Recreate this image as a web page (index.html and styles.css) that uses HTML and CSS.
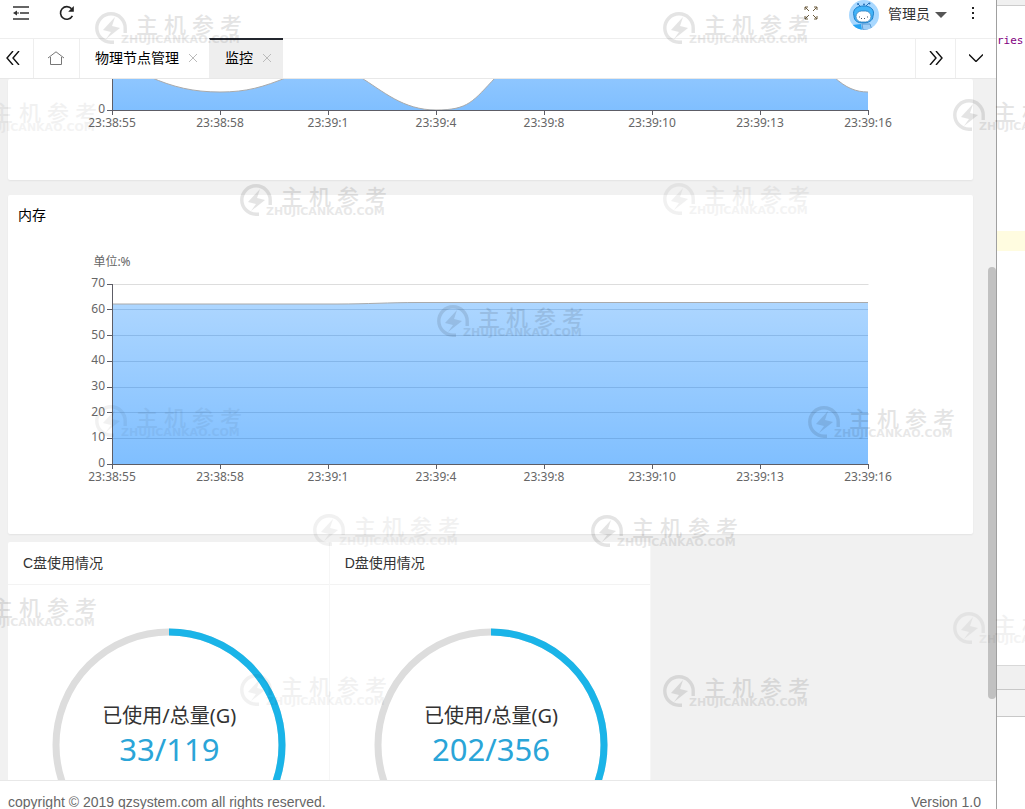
FILE: index.html
```html
<!DOCTYPE html>
<html lang="zh-CN">
<head>
<meta charset="utf-8">
<meta name="viewport" content="width=device-width, initial-scale=1">
<title>监控</title>
<link rel="stylesheet" href="styles.css">
</head>
<body>
<div class="desktop">
  <div class="window">
    <header class="topbar">
      <button class="icon-btn" aria-label="收起菜单">
        <svg width="16" height="14" viewBox="0 0 16 14"><path d="M0 1h16M7 7h9M0 13h16" stroke="#333" stroke-width="1.6" fill="none"/><path d="M0 7l4-2.6v5.2z" fill="#333"/><path d="M4 7h2" stroke="#333"/></svg>
      </button>
      <button class="icon-btn refresh" aria-label="刷新">
        <svg width="16" height="16" viewBox="0 0 16 16"><path d="M13.4 10.8A6.3 6.3 0 1 1 12.6 3.800" stroke="#222" stroke-width="1.6" fill="none"/><path d="M14.8 1v5.700H9.200z" fill="#222"/></svg>
      </button>
      <div class="top-right">
        <button class="icon-btn full" aria-label="全屏">
          <svg width="14" height="14" viewBox="0 0 14 14" fill="none" stroke="#6b5a3c" stroke-width="1"><path d="M1 4V1h3M1 1l4 4M10 1h3v3M13 1L9 5M1 10v3h3M1 13l4-4M13 10v3h-3M13 13L9 9"/></svg>
        </button>
        <button class="user">
          <svg class="avatar" width="30" height="30" viewBox="0 0 30 30">
            <defs><clipPath id="face"><circle cx="15" cy="15" r="15"/></clipPath></defs>
            <g clip-path="url(#face)">
              <rect width="30" height="30" fill="#a8d8ff"/>
              <path d="M9 4l3 3M20 3l-3 3" stroke="#2a72b8"/>
              <circle cx="9" cy="4" r="1" fill="#2a72b8"/><circle cx="15" cy="4.500" r="1" fill="#2a72b8"/><circle cx="20.500" cy="3.500" r="1" fill="#2a72b8"/>
              <path d="M5 16C3 9 8 6 15 6s11 4 9 10c0 5-5 7-10 7S5 21 5 16z" fill="#43b4f8" stroke="#1d7fc9"/>
              <path d="M3 25l9-1 1 6H5z" fill="#25a4f4"/>
              <path d="M13 24h8l2 6H14z" fill="#9fcdf5" stroke="#5d9bd4"/>
              <rect x="7" y="11" width="15" height="11" rx="5.500" fill="#fff" stroke="#317fbd" stroke-width=".8"/>
              <path d="M10.500 16.500v1M18.500 16.500v1M12 18.500h1M15 18.500h1" stroke="#456"/>
            </g>
          </svg>
          <span>管理员</span>
          <svg width="12" height="6" viewBox="0 0 12 6"><path d="M0 0h12L6 6z" fill="#555"/></svg>
        </button>
        <button class="icon-btn more" aria-label="更多">
          <svg width="4" height="14" viewBox="0 0 4 14" fill="#222"><path d="M1 1h2v2H1zM1 6h2v2H1zM1 11h2v2H1z"/></svg>
        </button>
      </div>
    </header>

    <nav class="tabs">
      <button class="tab-ctl prev" aria-label="向左"><svg width="14" height="14" viewBox="0 0 14 14"><path d="M7 0L1 7l6 7M13 0L7 7l6 7"/></svg></button>
      <button class="tab-ctl home" aria-label="主页"><svg width="16" height="14" viewBox="0 0 16 14"><path d="M0 7L8 .8 16 7M2.500 6v7.500h11V6"/></svg></button>
      <div class="tab"><a href="#nodes">物理节点管理</a><button class="close" aria-label="关闭"><svg width="8" height="8" viewBox="0 0 8 8"><path d="M0 0l8 8M8 0L0 8"/></svg></button></div>
      <div class="tab active"><a href="#monitor">监控</a><button class="close" aria-label="关闭"><svg width="8" height="8" viewBox="0 0 8 8"><path d="M0 0l8 8M8 0L0 8"/></svg></button></div>
      <button class="tab-ctl next" aria-label="向右"><svg width="14" height="14" viewBox="0 0 14 14"><path d="M1 0l6 7-6 7M7 0l6 7-6 7"/></svg></button>
      <button class="tab-ctl down" aria-label="页面操作"><svg width="14" height="8" viewBox="0 0 14 8"><path d="M0 .5l7 7 7-7"/></svg></button>
    </nav>

    <main class="content">
      <section class="card cpu">
        <svg class="chart" viewBox="0 0 965 101">
          <defs><linearGradient id="g1" gradientUnits="userSpaceOnUse" x1="0" y1="-70" x2="0" y2="31"><stop offset="0" stop-color="#add6ff"/><stop offset="1" stop-color="#80bfff"/></linearGradient></defs>
          <path d="M104-10L142-2C165 8 185 13 212 13S255 8 280-2C300-9 330-9 352-2C375 12 395 31 428 31S465 22 488-2V-40H826V-2C838 9 848 13 860 13V31H104Z" fill="url(#g1)"/>
          <path d="M142-2C165 8 185 13 212 13S255 8 280-2M352-2C375 12 395 31 428 31S465 22 488-2M826-2C838 9 848 13 860 13" class="line"/>
          <path class="axis" d="M104.500 0V36M99 31.500H860.500M212.500 31v5M320.500 31v5M428.500 31v5M536.500 31v5M644.500 31v5M752.500 31v5M860.500 31v5"/>
          <g class="ylab"><text x="97" y="34">0</text></g>
          <g class="xlab"><text x="104" y="48">23:38:55</text><text x="212" y="48">23:38:58</text><text x="320" y="48">23:39:1</text><text x="428" y="48">23:39:4</text><text x="536" y="48">23:39:8</text><text x="644" y="48">23:39:10</text><text x="752" y="48">23:39:13</text><text x="860" y="48">23:39:16</text></g>
        </svg>
      </section>

      <section class="card memory">
        <h2>内存</h2>
        <svg class="chart" viewBox="0 0 965 299">
          <defs><linearGradient id="g2" x1="0" y1="0" x2="0" y2="1"><stop offset="0" stop-color="#add6ff"/><stop offset="1" stop-color="#80bfff"/></linearGradient></defs>
          <path d="M104 49.500H860.500" stroke="#ddd"/>
          <path d="M104 69H330C360 69 380 67.500 410 67.500H860V229H104Z" fill="url(#g2)"/>
          <path d="M104 69H330C360 69 380 67.500 410 67.500H860" class="line"/>
          <path d="M104 74.500H860M104 100.500H860M104 126.500H860M104 152.500H860M104 177.500H860M104 203.500H860" stroke="#2a5c90" stroke-opacity=".2"/>
          <path class="axis" d="M104.500 49V234M99 229.500H860.500M99 49.500h5M99 74.500h5M99 100.500h5M99 126.500h5M99 152.500h5M99 177.500h5M99 203.500h5M212.500 229v5M320.500 229v5M428.500 229v5M536.500 229v5M644.500 229v5M752.500 229v5M860.500 229v5"/>
          <g class="ylab"><text x="97" y="52">70</text><text x="97" y="78">60</text><text x="97" y="104">50</text><text x="97" y="129">40</text><text x="97" y="155">30</text><text x="97" y="181">20</text><text x="97" y="206">10</text><text x="97" y="232">0</text></g>
          <g class="xlab"><text x="104" y="31">单位:%</text><text x="104" y="246">23:38:55</text><text x="212" y="246">23:38:58</text><text x="320" y="246">23:39:1</text><text x="428" y="246">23:39:4</text><text x="536" y="246">23:39:8</text><text x="644" y="246">23:39:10</text><text x="752" y="246">23:39:13</text><text x="860" y="246">23:39:16</text></g>
        </svg>
      </section>

      <div class="disks">
        <section class="disk">
          <h3>C盘使用情况</h3>
          <div class="gauge">
            <svg viewBox="0 0 234 234"><circle cx="117" cy="117" r="113" stroke="#ddd"/><path d="M117 4a113 113 0 0 1 0 226" stroke="#1ab4e8"/></svg>
            <div class="reading"><span>已使用/总量(G)</span><strong>33/119</strong></div>
          </div>
        </section>
        <section class="disk">
          <h3>D盘使用情况</h3>
          <div class="gauge">
            <svg viewBox="0 0 234 234"><circle cx="117" cy="117" r="113" stroke="#ddd"/><path d="M117 4a113 113 0 0 1 0 226" stroke="#1ab4e8"/></svg>
            <div class="reading"><span>已使用/总量(G)</span><strong>202/356</strong></div>
          </div>
        </section>
      </div>
      <div class="scroll-thumb"></div>
    </main>

    <footer class="footer"><span>copyright © 2019 qzsystem.com all rights reserved.</span><span>Version 1.0</span></footer>
  </div>

  <aside class="editor">
    <div class="editor-top"></div>
    <code>ries</code>
    <div class="editor-line"></div>
    <div class="editor-bar"></div>
    <div class="editor-status"></div>
  </aside>
</div>

<svg class="defs" width="0" height="0"><symbol id="bolt" viewBox="0 0 32 32"><path d="M19 30.200h-3A14.200 14.200 0 1 1 30.200 16v5" fill="none" stroke="currentColor" stroke-width="3.400"/><path d="M20 5L8 18l8 2-5 7 14-11-8-2z" fill="currentColor"/></symbol></svg>
<div class="marks" aria-hidden="true"></div>
<script src="marks.js"></script>
</body>
</html>
```
FILE: styles.css
```css
* { box-sizing: border-box; }
body { margin: 0; overflow: hidden; font: 14px/20px "Liberation Sans", "Noto Sans CJK SC", sans-serif; color: #333; background: #fff; }
button { border: 0; padding: 0; background: none; font: inherit; color: inherit; display: flex; align-items: center; justify-content: center; }
a { color: inherit; text-decoration: none; }
h2, h3 { margin: 0; font-weight: 400; font-size: 14px; }
svg { display: block; flex: none; }

.desktop { display: flex; height: 100vh; }
.window { flex: 1; min-width: 0; display: flex; flex-direction: column; border-right: 1px solid #a0a0a0; }

.topbar { flex: none; height: 38px; padding: 0 21px 12px 13px; display: flex; align-items: center; }
.refresh { margin-left: 30px; }
.top-right { margin-left: auto; display: flex; align-items: center; }
.full { margin-right: 31px; }
.user { height: 30px; gap: 5px; margin-top: 4px; }
.user span { margin: 0 0 2px 4px; }
.more { margin-left: 24px; }

.tabs { flex: none; height: 41px; display: flex; border-top: 1px solid #eee; border-bottom: 1px solid #e8e8e8; color: #000; }
.tab-ctl { width: 40px; padding-bottom: 2px; border-left: 1px solid #eee; }
.tab-ctl path, .close path { fill: none; stroke: #111; stroke-width: 1.4; }
.tab-ctl.home path { stroke: #777; stroke-width: 1; }
.prev { width: 33px; border: 0; padding-right: 7px; }
.home { width: 46px; padding-right: 2px; }
.tab { display: flex; align-items: center; gap: 10px; padding: 0 12px 2px 15px; border-left: 1px solid #eee; }
.close path { stroke: #bbb; stroke-width: 1; }
.close { width: 8px; }
.active { background: #eee; border-top: 2px solid #23262e; margin-top: -1px; }
.next { margin-left: auto; }
.down { width: 41px; }

.content { position: relative; flex: 1; min-height: 0; overflow: hidden; padding: 0 23px 0 8px; background: #f1f1f1; }
.card { background: #fff; border-radius: 2px; box-shadow: 0 1px 2px rgba(0, 0, 0, .06); }
.cpu { margin-bottom: 15px; }
.memory { margin-bottom: 8px; }
.memory h2 { line-height: 40px; padding-left: 10px; color: #000; }
.chart { width: 100%; height: auto; font: 12px "Noto Sans", "Noto Sans CJK SC", sans-serif; }
.chart text { fill: #666; }
.axis { fill: none; stroke: #5d5d66; }
.line { fill: none; stroke: #aaa; }
.xlab { text-anchor: middle; }
.ylab { text-anchor: end; }

.disks { display: grid; grid-template-columns: repeat(3, 1fr); }
.disk { background: #fff; border-right: 1px solid #f6f6f6; border-radius: 2px; }
.disk h3 { line-height: 42px; padding-left: 15px; border-bottom: 1px solid #f3f3f3; }
.gauge { display: grid; justify-content: center; padding: 43px 0 43px 2px; }
.gauge svg, .reading { grid-area: 1 / 1; }
.gauge svg { width: 234px; fill: none; stroke-width: 7; }
.reading { display: flex; flex-direction: column; align-items: center; padding-top: 73px; font-family: "Noto Sans", "Noto Sans CJK SC", sans-serif; }
.reading span { font-size: 20px; line-height: 30px; }
.reading strong { font-size: 31px; line-height: 36px; font-weight: 400; color: #2aa5d8; }
.scroll-thumb { position: absolute; right: 0; top: 188px; width: 8px; height: 432px; border-radius: 4px; background: #c1c1c1; }

.footer { flex: none; height: 29px; overflow: hidden; display: flex; justify-content: space-between; padding: 0 15px 0 8px; line-height: 42px; border-top: 1px solid #e8e8e8; color: #666; }

.editor { width: 28px; overflow: hidden; display: flex; flex-direction: column; }
.editor-top { height: 6px; background: #f0f0f0; border-bottom: 1px solid #ccc; }
.editor code { margin: 25px 0 180px; font: 11px/20px "DejaVu Sans Mono", monospace; color: #7f007f; }
.editor-line { height: 20px; background: #fffce0; }
.editor-bar { height: 25px; margin-top: 414px; background: #f0f0f0; border-top: 1px solid #d8d8d8; border-bottom: 1px solid #c8c8c8; }
.editor-status { height: 27px; background: #f3f3f3; border-bottom: 1px solid #c8c8c8; }

.defs { position: absolute; }
.marks { position: absolute; inset: 0; overflow: hidden; pointer-events: none; }
.mark { position: absolute; display: flex; gap: 9px; opacity: .1; color: #000; }
.mark.faint { opacity: .05; }
.mark-text { display: flex; flex-direction: column; gap: 1px; }
.mark-cn { display: flex; gap: 6px; font: 500 22px/22px "Noto Sans CJK SC", sans-serif; }
.mark-en { margin-left: -15px; font: 11px/10px "DejaVu Sans", sans-serif; -webkit-text-stroke: 0; font-weight: 700; opacity: .85; }
```
FILE: marks.js
```js
// Watermark tiles: [left, top, faint]
const tiles = [
  [95, 12], [663, 12], [-50, 100, 1], [953, 99], [240, 184], [663, 183, 1],
  [437, 305], [95, 405, 1], [808, 406], [313, 514, 1], [591, 515],
  [-50, 595], [240, 674, 1], [663, 675], [953, 612, 1]
];
const host = document.querySelector('.marks');
for (const [x, y, faint] of tiles) {
  const el = document.createElement('div');
  el.className = faint ? 'mark faint' : 'mark';
  el.style.left = x + 'px';
  el.style.top = y + 'px';
  el.innerHTML = '<svg width="32" height="32"><use href="#bolt"/></svg>' +
    '<div class="mark-text"><div class="mark-cn"><span>主</span><span>机</span><span>参</span><span>考</span></div>' +
    '<div class="mark-en">ZHUJICANKAO.COM</div></div>';
  host.append(el);
}
```
